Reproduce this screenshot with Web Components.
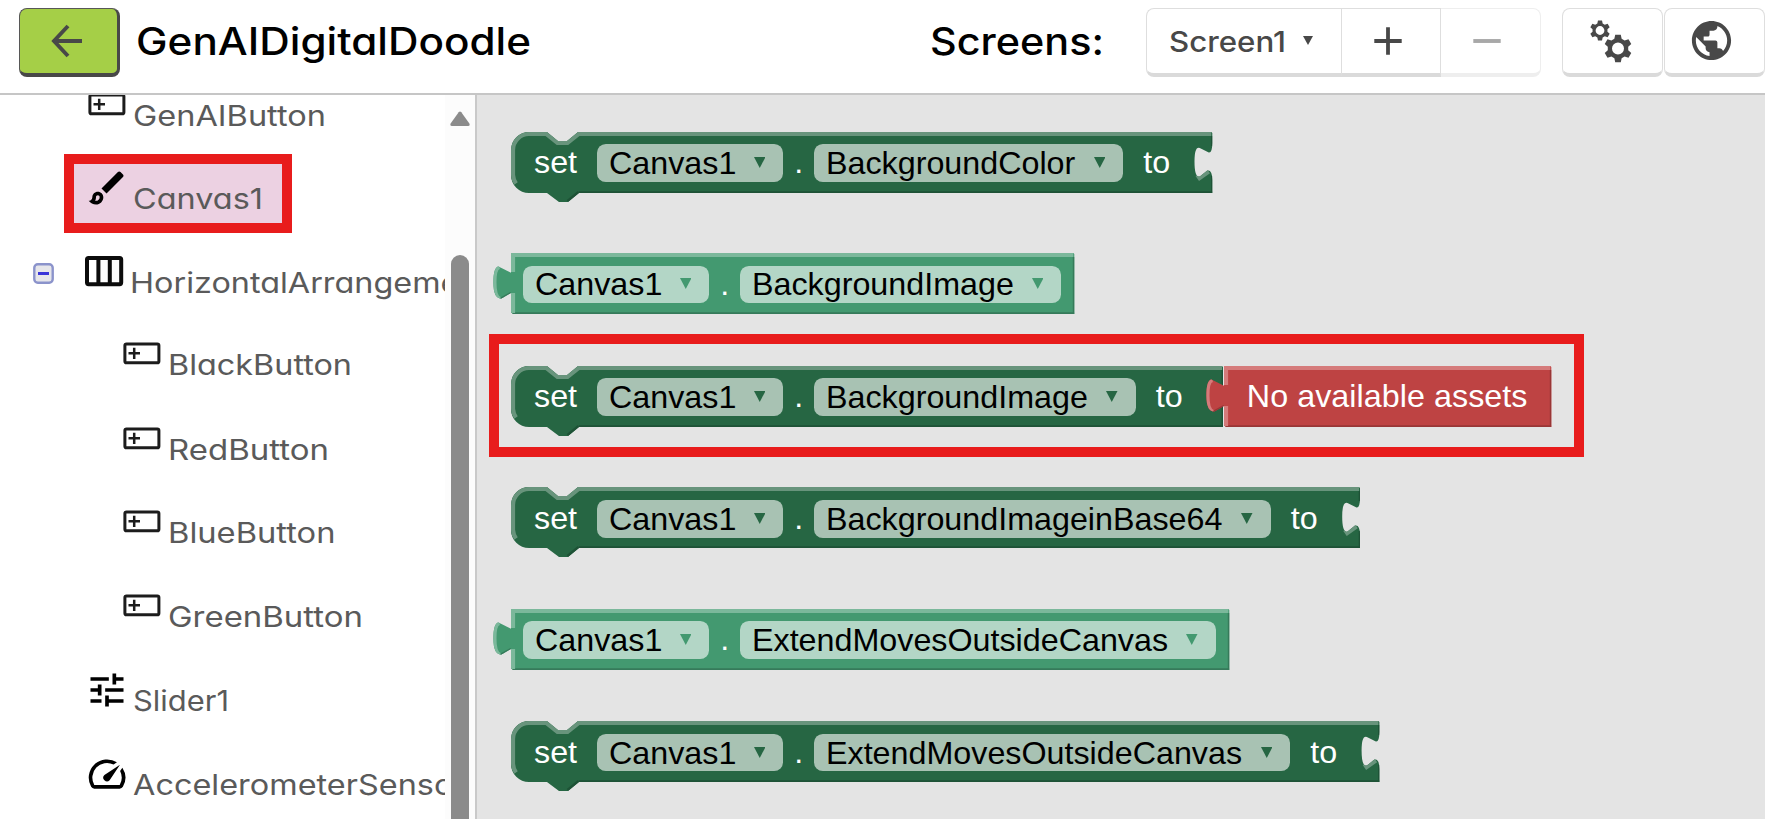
<!DOCTYPE html>
<html lang="en">
<head>
<meta charset="utf-8">
<title>GenAIDigitalDoodle</title>
<style>
html,body{margin:0;padding:0;background:#fff;overflow:hidden}
body{width:1772px;height:830px;font-family:Inter,"Noto Sans",sans-serif;font-feature-settings:"cv11" 1;font-optical-sizing:none}
</style>
</head>
<body>
<app-shell></app-shell>
<script>
const define=(name,render,after)=>customElements.define(name,class extends HTMLElement{
  connectedCallback(){
    if(this.shadowRoot)return;
    this.attachShadow({mode:'open'}).innerHTML=render(this);
    if(after)after(this);
  }
});
const num=(el,a,d=0)=>el.hasAttribute(a)?parseFloat(el.getAttribute(a)):d;

/* A label widened until its text (or its leading part) has the given width. */
define('fit-label',el=>`<style>:host{display:block;white-space:pre;line-height:1}span{display:inline-block;transform-origin:0 50%}</style><span>${el.getAttribute('text')}</span>`,el=>{
  const s=el.shadowRoot.querySelector('span'),full=s.textContent,probe=el.getAttribute('probe')||full;
  s.textContent=probe;
  const w=s.getBoundingClientRect().width;
  s.textContent=full;
  s.style.transform=`scaleX(${num(el,'w')/w})`;
});

/* Toothed wheel outline with a round hole. */
function gear(cx,cy,r,hole){
  let p=[];
  for(let i=0;i<6;i++){
    const a=-Math.PI/2+i*Math.PI/3;
    [[-.36,.74],[-.2,1],[.2,1],[.36,.74]].forEach(([d,k])=>p.push((cx+r*k*Math.cos(a+d)).toFixed(2)+','+(cy+r*k*Math.sin(a+d)).toFixed(2)));
  }
  return `M${p.join('L')}ZM${cx-hole},${cy}a${hole},${hole} 0 1 0 ${2*hole},0a${hole},${hole} 0 1 0 ${-2*hole},0Z`;
}
const m24=(d,s=44)=>`<svg width="${s}" height="${s}" viewBox="0 0 24 24"><path d="${d}" fill="currentColor"/></svg>`;
const ICONS={
  back:`<svg width="32" height="34" viewBox="0 0 32 34" fill="none" stroke="#484848" stroke-width="3.9"><path d="M32 17H4M18 2 4 17 18 32"/></svg>`,
  plus:`<svg width="30" height="30" viewBox="0 0 30 30" stroke="#484848" stroke-width="3.8"><path d="M1.3 15H28.7M15 1.3V28.7"/></svg>`,
  minus:`<svg width="30" height="30" viewBox="0 0 30 30" stroke="#a8a8a8" stroke-width="3.9"><path d="M1.3 15H28.7"/></svg>`,
  gears:`<svg width="44" height="44" viewBox="0 0 44 44" fill="#484848" fill-rule="evenodd"><path d="${gear(11,11.5,10.2,4.4)}"/><path d="${gear(29,29.5,14,6)}"/></svg>`,
  globe:m24('M12 2C6.48 2 2 6.48 2 12s4.48 10 10 10 10-4.48 10-10S17.52 2 12 2zm-1 17.93c-3.95-.49-7-3.85-7-7.93 0-.62.08-1.21.21-1.79L9 15v1c0 1.1.9 2 2 2v1.93zm6.9-2.54c-.26-.81-1-1.39-1.9-1.39h-1v-3c0-.55-.45-1-1-1H8v-2h2c.55 0 1-.45 1-1V7h2c1.1 0 2-.9 2-2v-.41c2.93 1.19 5 4.06 5 7.41 0 2.08-.8 3.97-2.1 5.39z',47),
  button:`<svg width="44" height="44" viewBox="0 0 44 44" fill="none" stroke="#1c1c1c"><rect x="4.9" y="12" width="34" height="18.8" rx="1.6" stroke-width="3"/><path d="M8.5 21.3H20M14.2 15.7V26.9" stroke-width="2.5"/></svg>`,
  canvas:m24('M7 16c.55 0 1 .45 1 1 0 1.1-.9 2-2 2-.17 0-.33-.02-.5-.05.31-.55.5-1.21.5-1.95 0-.55.45-1 1-1M18.67 3c-.26 0-.51.1-.71.29L9 12.25 11.75 15l8.96-8.96c.39-.39.39-1.02 0-1.41l-1.34-1.34c-.2-.2-.45-.29-.7-.29zM7 14c-1.66 0-3 1.34-3 3 0 1.31-1.16 2-2 2 .92 1.22 2.49 2 4 2 2.21 0 4-1.79 4-4 0-1.66-1.34-3-3-3z'),
  columns:`<svg width="44" height="44" viewBox="0 0 44 44" fill="none" stroke="#0c0c0c" stroke-width="4"><rect x="2" y="8" width="34.2" height="26.2" rx="1.6"/><path d="M13.4 8V35M24.8 8V35"/></svg>`,
  slider:m24('M3 17v2h6v-2H3zM3 5v2h10V5H3zm10 16v-2h8v-2h-8v-2h-2v6h2zM7 9v2H3v2h4v2h2V9H7zm14 4v-2H11v2h10zm-6-4h2V7h4V5h-4V3h-2v6z'),
  speed:m24('M20.38 8.57l-1.23 1.85a8 8 0 0 1-.22 7.58H5.07A8 8 0 0 1 15.58 6.85l1.85-1.23A10 10 0 0 0 3.35 19a2 2 0 0 0 1.72 1h13.85a2 2 0 0 0 1.74-1 10 10 0 0 0-.27-10.44zm-9.79 6.84a2 2 0 0 0 2.83 0l5.66-8.49-8.49 5.66a2 2 0 0 0 0 2.83z')
};
define('ui-icon',el=>`<style>:host{display:block;line-height:0;flex:none;color:#000}:host([name=globe]){color:#484848}</style>${ICONS[el.getAttribute('name')]}`);

define('app-header',()=>`<style>
:host{display:flex;box-sizing:border-box;width:1765px;height:95px;border-bottom:2px solid #c6c6c6;padding:8px 0 0 19px;align-items:flex-start;background:#fff}
.btn{box-sizing:border-box;height:68.5px;display:flex;align-items:center;justify-content:center;background:#fff;border:1.5px solid #dedede;border-bottom:4px solid #dadada;border-radius:8px}
.back{width:101px;background:#a5cf47;border:1.5px solid #575757;border-right:3px solid #484848;border-bottom:4px solid #484848;padding-right:4px}
.title{font-size:37.5px;font-weight:500;color:#000;margin-top:15px}
.grp{display:flex;margin-left:46px}
.a{width:195px;border-radius:8px 0 0 8px;gap:18px;font-size:28.5px;font-weight:500;color:#484848;justify-content:flex-start;padding-left:22px;border-right-width:0}
.a fit-label{width:116px;margin-top:2px}
.b{width:100px;border-radius:0;padding-right:6px}.c{width:100px;border-radius:0 8px 8px 0;border-color:#eee;border-left:0;padding-right:8px}
</style>
<div class="btn back"><ui-icon name="back"></ui-icon></div>
<fit-label class="title" style="margin-left:16.5px;width:396.5px" text="GenAIDigitalDoodle" w="395"></fit-label>
<fit-label class="title" style="margin-left:398px;width:171px" text="Screens:" w="174"></fit-label>
<div class="grp"><div class="btn a"><fit-label text="Screen1" w="117"></fit-label><svg width="10" height="10" viewBox="0 0 10 10"><path d="M0 0H10L5 9Z" fill="#484848"/></svg></div>
<div class="btn b"><ui-icon name="plus"></ui-icon></div><div class="btn c"><ui-icon name="minus"></ui-icon></div></div>
<div class="btn" style="width:101px;margin-left:21px;padding-right:3px"><ui-icon name="gears"></ui-icon></div>
<div class="btn" style="width:101px;margin-left:1px;padding-right:6px"><ui-icon name="globe"></ui-icon></div>`);

define('tree-item',el=>`<style>
:host{display:flex;position:relative;box-sizing:border-box;height:${num(el,'h',83.7)}px;padding-left:${num(el,'indent',84.5)}px;color:#5a5a5a;font-size:28.5px;flex:none}
fit-label{margin:19px 0 0 ${num(el,'gap',4)}px}
ui-icon,fit-label{position:relative}
.hl{position:absolute;box-sizing:border-box;left:63.5px;top:-12.7px;width:228.5px;height:79.7px;border:10px solid #e81c1c;background:#ecd1e2}
.ex{position:absolute;left:33px;top:13.5px}
</style>
${el.hasAttribute('selected')?'<div class="hl"></div>':''}
${el.hasAttribute('expander')?'<svg class="ex" width="21" height="21" viewBox="0 0 21 21"><rect x="1.3" y="1.3" width="18.4" height="18.4" rx="3.5" fill="#e6e6ea" stroke="#8b93cb" stroke-width="2.4"/><path d="M5 10.5H16" stroke="#3a35d8" stroke-width="3"/></svg>':''}
<ui-icon name="${el.getAttribute('icon')}"></ui-icon>
<fit-label text="${el.getAttribute('label')}" w="${el.getAttribute('w')}" probe="${el.getAttribute('probe')||''}"></fit-label>`);

define('component-tree',()=>`<style>
:host{display:flex;width:477px;height:724px;box-sizing:border-box;border-right:2px solid #c9c9c9;flex:none;background:#fff}
.list{width:445px;height:724px;overflow:hidden;display:flex;flex-direction:column}
.list>:first-child{margin-top:-12.5px}
.bar{width:30px;background:#fcfcfc;display:flex;flex-direction:column;align-items:center}
.arrow{margin-top:16px}
.thumb{width:18px;flex:1;margin-top:129px;background:#8b8b8b;border-radius:9px 9px 0 0}
</style>
<div class="list">
<tree-item icon="button" label="GenAIButton" w="193"></tree-item>
<tree-item selected icon="canvas" label="Canvas1" w="130" gap="4"></tree-item>
<tree-item expander h="82.3" icon="columns" label="HorizontalArrangement1" probe="HorizontalArrangem" w="310.5" gap="1.5"></tree-item>
<tree-item icon="button" h="84.6" indent="119.5" label="BlackButton" w="184"></tree-item>
<tree-item icon="button" indent="119.5" label="RedButton" w="161"></tree-item>
<tree-item icon="button" indent="119.5" label="BlueButton" w="167.5"></tree-item>
<tree-item icon="button" h="83.9" indent="119.5" label="GreenButton" w="195"></tree-item>
<tree-item icon="slider" h="84.2" label="Slider1" w="96"></tree-item>
<tree-item icon="speed" label="AccelerometerSensor1" probe="AccelerometerSens" w="301"></tree-item>
</div>
<div class="bar"><svg class="arrow" width="20" height="15" viewBox="0 0 20 15"><path d="M8.7 1.2Q10-.4 11.3 1.2L19.4 12.4Q20.3 15 18 15H2Q-.3 15 .6 12.4Z" fill="#8b8b8b"/></svg><div class="thumb"></div></div>`);

define('block-field',el=>`<style>
:host{display:flex;box-sizing:border-box;width:${num(el,'w')}px;height:37.8px;border-radius:8.8px;background:rgba(255,255,255,.6);color:#000;padding:0 18px 0 12px;align-items:center;justify-content:space-between;flex:none}
svg{flex:none;margin-top:-1px}
</style><slot></slot><svg width="11.5" height="11" viewBox="0 0 11.5 11"><path d="M0 0H11.5L5.75 11Z" fill="${el.getAttribute('tint')}"/></svg>`);

/* A Blockly block: its outline follows from the kind and the width; its texts and fields flow over it. */
const H=61;
function outline(kind,W){
  if(kind==='value')return `M0,0H${W-1}L${W},1V${H}H2L0,59V40L-9.5,45.5Q-17.6,46 -17.6,29.5Q-17.6,14 -12.5,13.6L0,19.8Z`;
  const right=kind==='set'?`V11Q${W},21 ${W-3.5},20.5L${W-12.5},16Q${W-17.8},14 ${W-17.8},29.5Q${W-17.8},46 ${W-12.5},44.5L${W-5},38.6Q${W},37.5 ${W},48`:'';
  return `M0,18A18,18 0 0 1 18,0H36L47,9H56L67,0H${W-1}L${W},1${right}V${H}H68L57,70H48L36,${H}H18A18,18 0 0 1 0,43Z`;
}
define('code-block',el=>{
  const kind=el.getAttribute('kind'),val=kind==='value',red=el.hasAttribute('red'),W=num(el,'w');
  const fill=red?'#be4343':val?'#439970':'#266643';
  const hi=red?'#d57b7b':val?'#7bb89b':'#68947c',lo=red?'#983636':val?'#367a5a':'#1e5236';
  const d=outline(kind,W);
  const light=val?`M${W-1},1.8H2V19M2,40V60M-11.5,14Q-16.6,15 -16.6,29.5Q-16.6,44 -11,46`:`M5,51.5A17,17 0 0 1 2,43V18A16,16 0 0 1 18,2H35.5L46.5,11H56.5L67.5,2H${W-1}`;
  const sock=kind==='set'?`<path d="M${W-15},46.5L${W-4},38.8" stroke="${hi}" stroke-width="6" fill="none"/>`:'';
  const id='c'+W+(val?'v':'s');
  return `<style>
:host{display:block;position:relative;width:${W}px;height:61px;flex:none;font:32.27px "Liberation Sans",Arial,sans-serif;font-feature-settings:normal;color:#fff}
.bg{position:absolute;left:-20px;top:0;overflow:visible;z-index:0}
.row{position:relative;display:flex;height:37.8px;padding-top:12.3px;line-height:36px;white-space:pre}
</style>
<svg class="bg" width="${W+24}" height="72" viewBox="-20 0 ${W+24} 72"><defs><clipPath id="${id}"><path d="${d}"/></clipPath></defs>
<path d="${d}" fill="${fill}"/><g clip-path="url(#${id})"><path d="M${val?0:68},60.5H${W}" stroke="${lo}" stroke-width="2.4"/>${kind==='set'?`<path d="M${W-.5},4V14M${W-.5},44V61" stroke="${lo}" stroke-width="1.6"/>`:`<path d="M${W-.5},4V61" stroke="${lo}" stroke-width="2"/>`}${val?`<path d="M-11,46L0,40" stroke="${lo}" stroke-width="2.4"/>`:`<path d="M57,69.5L68,60.5" stroke="${lo}" stroke-width="4"/>`}${sock}<path d="${light}" fill="none" stroke="${hi}" stroke-width="4.2"/></g></svg>
<div class="row"><slot></slot></div>`;
});

const setter=(prop,fw,w,kind='set',extra='')=>`<code-block kind="${kind}" w="${w}"><span style="margin-left:23px;width:63px">set</span><block-field w="186.3" tint="#266643">Canvas1</block-field><span style="width:30.7px;text-align:center">.</span><block-field w="${fw}" tint="#266643">${prop}</block-field><span style="margin-left:20px">to</span></code-block>${extra}`;
const getter=(prop,fw,w)=>`<code-block kind="value" w="${w}"><block-field style="margin-left:12px" w="186.3" tint="#439970">Canvas1</block-field><span style="width:30.7px;text-align:center">.</span><block-field w="${fw}" tint="#439970">${prop}</block-field></code-block>`;

define('block-drawer',()=>`<style>
:host{display:flex;flex-direction:column;width:1288px;height:724px;background:#e4e4e4;box-sizing:border-box;padding:36.8px 0 0 34px;overflow:hidden}
.r{display:flex;position:relative}
.mark{position:absolute;box-sizing:border-box;left:-22.3px;top:-32.6px;width:1095.6px;height:123.3px;border:10px solid #e81c1c}
</style>
<div class="r">${setter('BackgroundColor',309.3,701.3)}</div>
<div class="r" style="margin-top:60.5px">${getter('BackgroundImage',321.3,563.3)}</div>
<div class="r" style="margin-top:51.8px">${setter('BackgroundImage',321.7,712,'plain','<code-block kind="value" red w="327.3" style="margin-left:.8px"><span style="margin-left:23px;letter-spacing:.05px">No available assets</span></code-block>')}<div class="mark"></div></div>
<div class="r" style="margin-top:60.4px">${setter('BackgroundImageinBase64',456.7,849)}</div>
<div class="r" style="margin-top:60.5px">${getter('ExtendMovesOutsideCanvas',476,718.3)}</div>
<div class="r" style="margin-top:51.4px">${setter('ExtendMovesOutsideCanvas',476.3,868.4)}</div>`);

define('app-shell',()=>`<style>:host{display:block}.main{display:flex}</style><app-header></app-header><div class="main"><component-tree></component-tree><block-drawer></block-drawer></div>`);
</script>
</body>
</html>
